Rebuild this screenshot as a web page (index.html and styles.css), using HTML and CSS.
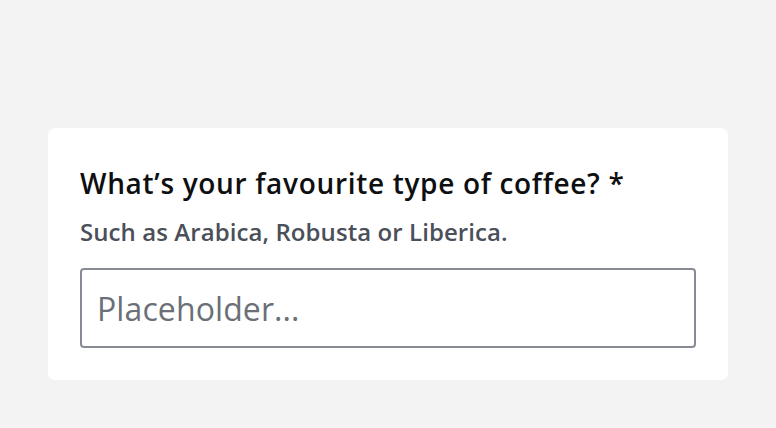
FILE: index.html
```html
<!DOCTYPE html>
<html lang="en">
<head>
<meta charset="utf-8">
<link rel="stylesheet" href="styles.css">
</head>
<body>
<main class="page">
  <div class="card">
    <label class="label" for="coffee">What’s your favourite type of coffee? *</label>
    <p class="hint">Such as Arabica, Robusta or Liberica.</p>
    <input class="input" id="coffee" type="text" placeholder="Placeholder...">
  </div>
</main>
</body>
</html>
```

FILE: styles.css
```css
html, body {
  margin: 0;
  padding: 0;
  background: #f3f3f3;
  font-family: "Open Sans", "Noto Sans", sans-serif;
}
.page {
  padding: 128px 48px 48px 48px;
}
.card {
  background: #ffffff;
  border-radius: 7px;
  width: 680px;
  box-sizing: border-box;
  padding: 35px 32px 32px 32px;
  display: flex;
  flex-direction: column;
}
.label {
  font-size: 28px;
  font-weight: 600;
  line-height: 40px;
  color: #0e0f11;
  letter-spacing: 0.68px;
}
.hint {
  margin: 13px 0 20px 0;
  font-size: 24px;
  font-weight: 600;
  line-height: 32px;
  color: #4b4f59;
  letter-spacing: 0.08px;
}
.input {
  box-sizing: border-box;
  width: 616px;
  height: 80px;
  border: 2px solid #878b94;
  border-radius: 4px;
  padding: 0 15px;
  font-family: "Open Sans", "Noto Sans", sans-serif;
  font-size: 32px;
  letter-spacing: 0.1px;
  color: #0e0f11;
  outline: none;
}
.input::placeholder {
  color: #6b6f78;
  opacity: 1;
}
```
